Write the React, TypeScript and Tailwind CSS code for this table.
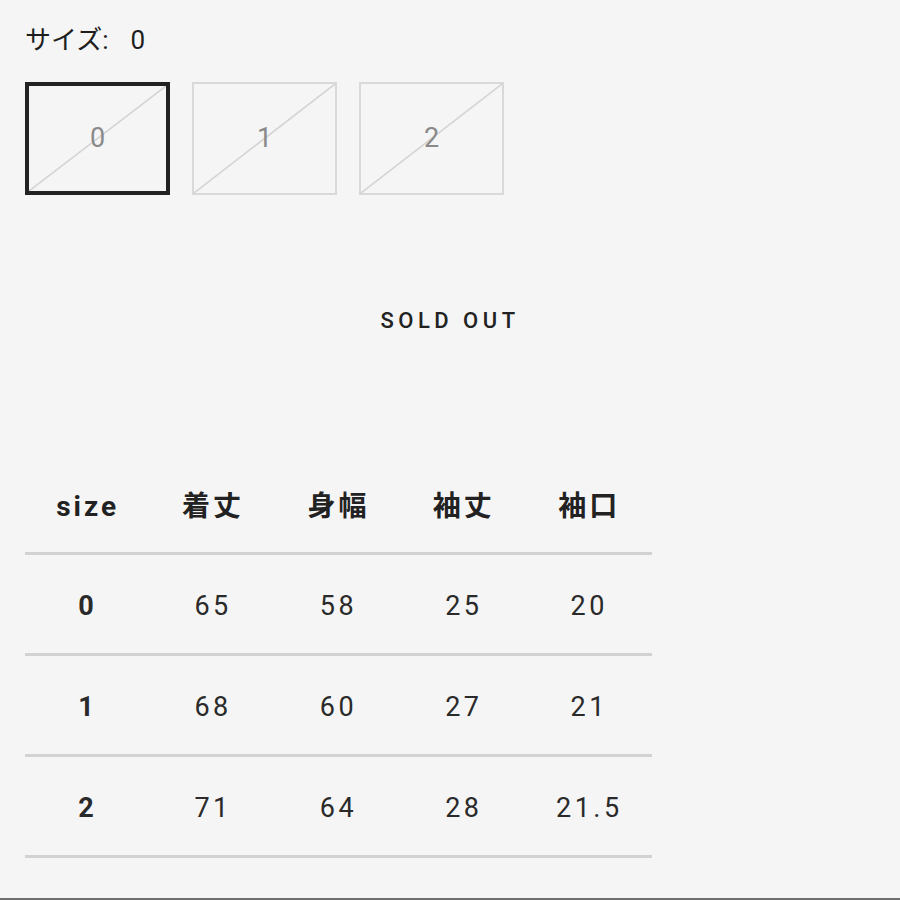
const SIZES = ['0', '1', '2'];

const ROWS = [
  ['0', '65', '58', '25', '20'],
  ['1', '68', '60', '27', '21'],
  ['2', '71', '64', '28', '21.5'],
];

const HEAD = ['size', '着丈', '身幅', '袖丈', '袖口'];

const font = "font-['Roboto','Noto_Sans_CJK_JP',sans-serif]";

function Swatch({ label, selected }: { label: string; selected: boolean }) {
  return (
    <div
      className={
        'relative h-[113px] w-[145px] ' +
        (selected ? 'border-[4px] border-[#222222]' : 'border-2 border-[#d9d9d9]')
      }
    >
      {/* crossed-out placeholder: the variant has no stock */}
      <svg className="absolute inset-0 h-full w-full" preserveAspectRatio="none" viewBox="0 0 100 100">
        <line x1="0" y1="100" x2="100" y2="0" stroke="#d4d4d4" strokeWidth="1.6" vectorEffect="non-scaling-stroke" />
      </svg>
      <span className="relative flex h-full items-center justify-center text-[27px] text-[#8a8a8a]">
        {label}
      </span>
    </div>
  );
}

export default function App() {
  const selected = '0';
  return (
    <div className={`${font} h-[900px] w-[900px] overflow-hidden bg-[#f5f5f5] text-[#222222]`}>
      <div className="flex h-[898px] flex-col px-[25px]">
        <p className="mt-[22px] flex h-[36px] items-center text-[26px] leading-[36px] text-[#1e1e1e]">
          <span>サイズ:</span>
          <span className="ml-[22px]">{selected}</span>
        </p>
        <div className="mt-[24px] flex gap-[22px]">
          {SIZES.map((s) => (
            <Swatch key={s} label={s} selected={s === selected} />
          ))}
        </div>
        <div className="mt-[111px] text-center text-[22px] font-medium leading-[30px] tracking-[4.5px] text-[#222222]">
          SOLD OUT
        </div>
        <table className="mt-[116px] w-[627px] table-fixed border-collapse">
          <thead>
            <tr className="h-[101px] border-b-[3px] border-[#d2d2d2]">
              {HEAD.map((h) => (
                <th key={h} className="pt-[10px] text-center text-[28px] font-bold tracking-[3px] text-[#222222]">
                  {h}
                </th>
              ))}
            </tr>
          </thead>
          <tbody>
            {ROWS.map((r) => (
              <tr key={r[0]} className="h-[101px] border-b-[3px] border-[#d2d2d2]">
                {r.map((v, i) => (
                  <td
                    key={i}
                    className={
                      'pt-[6px] text-center text-[27px] tracking-[3.5px] text-[#2a2a2a] ' + (i === 0 ? 'font-bold' : '')
                    }
                  >
                    {v}
                  </td>
                ))}
              </tr>
            ))}
          </tbody>
        </table>
      </div>
      <div className="h-[2px] bg-[#6e6e6e]" />
    </div>
  );
}
